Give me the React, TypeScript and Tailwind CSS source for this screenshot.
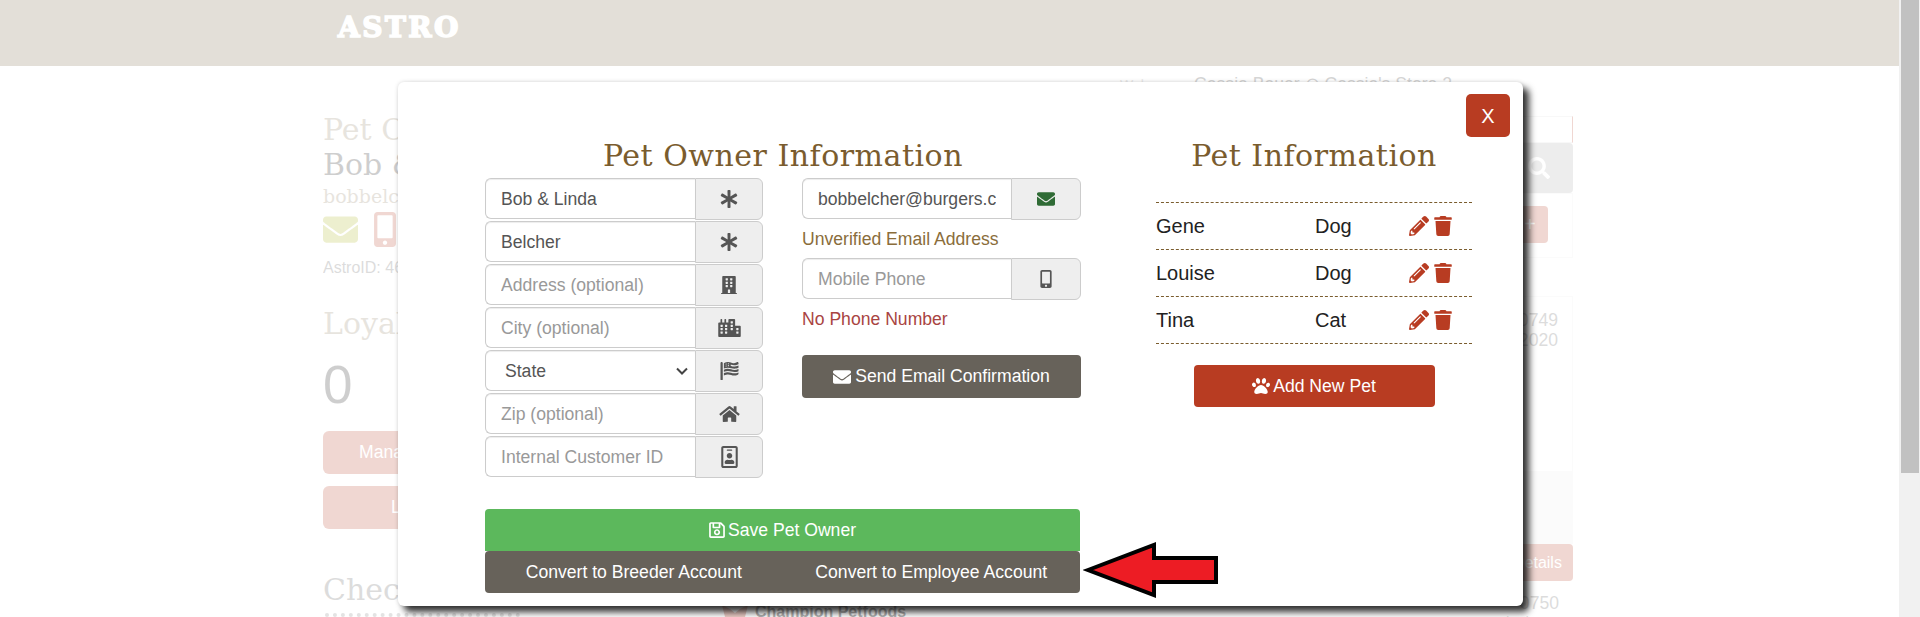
import React from 'react';
import {
  FaAsterisk, FaBuilding, FaCity, FaFlagUsa, FaHome, FaRegIdBadge, FaEnvelope, FaMobileAlt,
  FaPencilAlt, FaTrash, FaPaw, FaRegSave, FaSearch,
} from 'react-icons/fa';

const sans = "font-['Liberation_Sans',Arial,sans-serif]";
const slab = "font-['DejaVu_Serif',serif]";

const ownerRows = [
  { value: 'Bob & Linda', icon: <FaAsterisk className="w-[18px] h-[18px]" /> },
  { value: 'Belcher', icon: <FaAsterisk className="w-[18px] h-[18px]" /> },
  { placeholder: 'Address (optional)', icon: <FaBuilding className="w-[16px] h-[18px]" /> },
  { placeholder: 'City (optional)', icon: <FaCity className="w-[23px] h-[18px]" /> },
  { select: 'State', icon: <FaFlagUsa className="w-[19px] h-[18px]" /> },
  { placeholder: 'Zip (optional)', icon: <FaHome className="w-[21px] h-[18px]" /> },
  { placeholder: 'Internal Customer ID', icon: <FaRegIdBadge className="w-[17px] h-[22px]" /> },
];

const pets = [
  { name: 'Gene', kind: 'Dog' },
  { name: 'Louise', kind: 'Dog' },
  { name: 'Tina', kind: 'Cat' },
];

function Field({ value, placeholder, select, icon, addon = 'w-[68px]', width = 'w-[278px]' }: any) {
  return (
    <div className={`flex h-[43px] ${width}`}>
      <div className="flex-1 min-w-0 h-[41px] border border-[#ccc] border-r-0 rounded-l-[6px] flex items-center pl-[15px] pr-[6px] pt-[1px] text-[17.6px] shadow-[inset_0_1px_1px_rgba(0,0,0,0.075)]">
        {select ? (
          <div className="flex w-full items-center justify-between pl-[4px] text-[#555]">
            <span>{select}</span>
            <svg width="12" height="8" viewBox="0 0 12 8" className="mr-[1px]">
              <path d="M1 1.5 L6 6.5 L11 1.5" fill="none" stroke="#444" strokeWidth="2" />
            </svg>
          </div>
        ) : (
          <span className={`whitespace-nowrap overflow-hidden ${value ? 'text-[#555]' : 'text-[#999]'}`}>{value || placeholder}</span>
        )}
      </div>
      <div className={`${addon} h-[42px] bg-[#eee] border border-[#ccc] rounded-r-[6px] flex items-center justify-center text-[#555]`}>
        {icon}
      </div>
    </div>
  );
}

function Backdrop() {
  return (
    <div className={`flex justify-between pl-[323px] pr-[326px] opacity-20 ${sans}`}>
      <div className="w-[320px] pt-[46px]">
        <div className={`text-[30px] leading-[35px] text-[#8d7b5f] ${slab}`}>Pet Owner</div>
        <div className={`text-[30px] leading-[35px] text-[#111] ${slab}`}>Bob &amp; Linda</div>
        <div className={`text-[19px] leading-[28px] text-[#8d7b5f] ${slab}`}>bobbelcher</div>
        <div className="flex items-center gap-[14px] mt-[2px] h-[35px]">
          <FaEnvelope className="w-[35px] h-[35px] text-[#aab415]" />
          <FaMobileAlt className="w-[26px] h-[35px] text-[#b83c22]" />
        </div>
        <div className="text-[16px] leading-[20px] text-[#555] mt-[11px]">AstroID: 46</div>
        <div className={`text-[30px] text-[#8d7b5f] mt-[28px] leading-[35px] ${slab}`}>Loyalty</div>
        <div className="text-[53px] text-[#111] leading-[56px] mt-[16px]">0</div>
        <div className="h-[43px] mt-[18px] w-[300px] rounded-[6px] bg-[#b83c22] text-white text-[17.6px] pl-[36px] leading-[43px]">Manage</div>
        <div className="h-[43px] mt-[12px] w-[300px] rounded-[6px] bg-[#b83c22] text-white text-[17.6px] pl-[68px] leading-[43px]">L</div>
        <div className={`text-[30px] text-[#555] mt-[43px] leading-[35px] ${slab}`}>Check</div>
        <div className="mt-[6px] ml-[2px] h-[4px] w-[195px] border-t-[4px] border-dotted border-[#777]" />
      </div>
      <div className="w-[80px] pt-[8px] flex flex-col items-end">
        <div className="text-[17.6px] leading-[20px] text-[#333] whitespace-nowrap mr-[121px]">
          <span className="text-[14px] text-[#999] mr-[16px]">Welcome</span>Cassia Bauer ⊙ Cassia's Store 2
        </div>
        <div className="mt-[21px] h-[27px] w-[60px] border border-[#ddd] border-r-[#b83c22]" />
        <div className="h-[50px] w-[60px] bg-[#aaa] rounded-r-[4px] flex items-center justify-center text-white">
          <FaSearch className="w-[22px] h-[22px] ml-[-8px]" />
        </div>
        <div className="h-[65px] w-[60px] border border-[#eee] flex items-start justify-end pt-[12px] pr-[24px]">
          <div className="w-[30px] h-[37px] bg-[#b83c22] rounded-r-[4px] text-white text-[20px] leading-[37px] pl-[6px]">+</div>
        </div>
        <div className="mt-[38px] text-[17.6px] leading-[20px] text-[#555] text-right pr-[14px] pt-[13px] w-[60px] border border-[#eee] h-[176px]">
          <div>0749</div>
          <div>2020</div>
        </div>
        <div className="h-[72px] w-[60px] bg-[#eee]" />
        <div className="w-[60px] h-[37px] bg-[#b83c22] rounded-r-[4px] text-white text-[16px] leading-[37px] text-right pr-[15px]">Details</div>
        <div className="text-[17.6px] leading-[20px] text-[#555] text-right pr-[14px] mt-[12px] w-[60px]">0750</div>
        <div className="text-[14px] leading-[14px] text-[#555] whitespace-nowrap mt-[2px] mr-[14px]">04/03/2020</div>
      </div>
    </div>
  );
}

export default function App() {
  return (
    <div className={`relative h-[617px] overflow-hidden bg-white flex ${sans}`}>
      <div className="flex-1 min-w-0 relative">
        <div className="h-[66px] bg-[#e3dfd8] pl-[338px] pt-[14px]">
          <span className={`block text-[28px] leading-[28px] font-bold tracking-[2.5px] text-white [-webkit-text-stroke:1.6px_white] ${slab}`}>ASTRO</span>
        </div>
        <Backdrop />
        <svg className="absolute left-[720px] top-[605px] opacity-25" width="30" height="12" viewBox="0 0 30 12">
          <path d="M2 0 L10 4 L15 8 L20 4 L28 0 L25 12 L5 12 Z" fill="#b83c22" />
        </svg>
        <div className="absolute left-[755px] top-[603px] text-[16px] leading-[18px] font-bold text-[#222] opacity-35">Champion Petfoods</div>

        <div className="absolute left-[398px] top-[82px] w-[1125px] h-[524px] bg-white rounded-[6px] shadow-[6px_6px_7px_rgba(0,0,0,0.8),0_0_4px_rgba(0,0,0,0.15)] pl-[87px] pt-[12px] z-10">
          <div className="absolute right-[13px] top-[12px] w-[44px] h-[43px] bg-[#b83c22] rounded-[5px] text-white text-[20px] flex items-center justify-center">X</div>

          <div className="flex">
            <div className="w-[596px]">
              <h2 className={`text-[30px] leading-[36px] tracking-[0.5px] text-[#7a5c2e] text-center mt-[44px] mb-[4px] whitespace-nowrap ${slab}`}>Pet Owner Information</h2>
              <div className="flex gap-[39px]">
                <div>
                  {ownerRows.map((r, i) => <Field key={i} {...r} />)}
                </div>
                <div className="w-[279px]">
                  <Field value="bobbelcher@burgers.c" icon={<FaEnvelope className="w-[18px] h-[18px] text-[#2f6b35]" />} addon="w-[70px]" width="w-[279px]" />
                  <div className="text-[17.6px] leading-[37px] h-[37px] text-[#8a6d3b]">Unverified Email Address</div>
                  <Field placeholder="Mobile Phone" icon={<FaMobileAlt className="w-[14px] h-[18px]" />} addon="w-[70px]" width="w-[279px]" />
                  <div className="text-[17.6px] leading-[37px] h-[37px] text-[#a94442]">No Phone Number</div>
                  <button className="mt-[17px] w-full h-[43px] bg-[#67625a] rounded-[4px] text-white text-[17.6px] flex items-center justify-center gap-[4px]">
                    <FaEnvelope className="w-[18px] h-[18px]" />Send Email Confirmation
                  </button>
                </div>
              </div>
            </div>
            <div className="w-[316px] ml-[75px]">
              <h2 className={`text-[30px] leading-[36px] tracking-[0.5px] text-[#7a5c2e] text-center mt-[44px] whitespace-nowrap ${slab}`}>Pet Information</h2>
              <div className="mt-[28px] border-t border-dashed border-[#7a5c2e]">
                {pets.map((p) => (
                  <div key={p.name} className="h-[47px] flex items-center border-b border-dashed border-[#7a5c2e] text-[20px] text-[#222]">
                    <span className="w-[159px]">{p.name}</span>
                    <span className="w-[94px]">{p.kind}</span>
                    <FaPencilAlt className="w-[20px] h-[20px] text-[#b83c22]" />
                    <FaTrash className="w-[18px] h-[20px] ml-[5px] text-[#b83c22]" />
                  </div>
                ))}
              </div>
              <button className="mt-[21px] mx-auto w-[241px] h-[42px] bg-[#b83c22] rounded-[4px] text-white text-[17.6px] flex items-center justify-center gap-[3px]">
                <FaPaw className="w-[18px] h-[18px]" />Add New Pet
              </button>
            </div>
          </div>

          <div className="w-[595px] mt-[30px]">
            <button className="w-full h-[42px] bg-[#5cb85c] rounded-t-[4px] text-white text-[17.6px] flex items-center justify-center gap-[3px]">
              <FaRegSave className="w-[16px] h-[18px]" />Save Pet Owner
            </button>
            <div className="grid grid-cols-2 h-[42px] bg-[#67625a] rounded-[4px] text-white text-[17.6px] items-center text-center">
              <span>Convert to Breeder Account</span>
              <span>Convert to Employee Account</span>
            </div>
          </div>
        </div>

        <svg className="absolute left-[1083px] top-[541px] z-20" width="138" height="58" viewBox="0 0 138 58">
          <path d="M5 29 L71 4 L71 17 L133 17 L133 41 L71 41 L71 54 Z" fill="#ed1c24" stroke="#000" strokeWidth="4" />
        </svg>
      </div>
      <div className="w-[21px] bg-[#f1f1f1] shrink-0 pl-[2px] pr-[1px]">
        <div className="h-[473px] bg-[#c1c1c1]" />
      </div>
    </div>
  );
}
